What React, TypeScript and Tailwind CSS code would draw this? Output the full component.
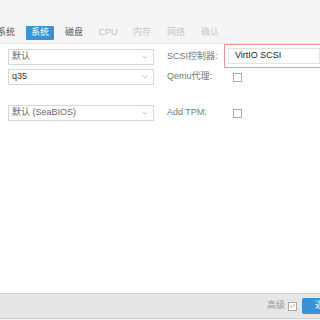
import { Check } from "lucide-react";

const tabs = [
    { label: "系统", tone: "text-[#555]" },
    { label: "系统", tone: "bg-[#3892d4] text-white", active: true },
    { label: "磁盘", tone: "text-[#555]" },
    { label: "CPU", tone: "text-[#c2c2c2]" },
    { label: "内存", tone: "text-[#c8c8c8]" },
    { label: "网络", tone: "text-[#c8c8c8]" },
    { label: "确认", tone: "text-[#c8c8c8]" },
];

function Select({ value, dark }: { value: string; dark?: boolean }) {
    return (
        <div className="flex h-[16px] w-[146px] items-center justify-between border border-[#d6d6d6] bg-white pl-[3px] pr-[5px]">
            <span className={dark ? "text-[#333]" : "text-[#666]"}>{value}</span>
            <svg width="6" height="4" viewBox="0 0 6 4" fill="none">
                <path d="M0.5 0.5 L3 3 L5.5 0.5" stroke="#b5b5b5" strokeWidth="0.8" />
            </svg>
        </div>
    );
}

function Box({ checked }: { checked?: boolean }) {
    return (
        <div className="flex h-[9px] w-[9px] items-center justify-center border border-[#a8a8a8] bg-white">
            {checked && <Check className="h-[8px] w-[8px] text-[#777]" strokeWidth={2} />}
        </div>
    );
}

export default function App() {
    return (
        <div className="flex h-[320px] w-[320px] flex-col overflow-hidden bg-white font-['Liberation_Sans','Noto_Sans_CJK_SC',sans-serif] text-[9px]">

            <div className="flex h-[44px] items-end gap-[6px] border-b border-[#e8e8e8] bg-[#f5f5f5] pb-[3px] pl-0 ml-0">
                <div className="ml-[-8px] flex gap-[6px]">
                    {tabs.map((t, i) => (
                        <div
                            key={i}
                            className={`flex h-[14px] w-[28px] items-center justify-center rounded-[1px] ${t.tone}`}
                        >
                            {t.label}
                        </div>
                    ))}
                </div>
            </div>

            <div className="flex flex-1 flex-col">
                <div className="flex h-[25px] items-start">
                    <div className="ml-[8px] mt-[5px]">
                        <Select value="默认" />
                    </div>
                    <div className="ml-[13px] mt-[5px] flex h-[16px] w-[57px] items-center text-[#777]">SCSI控制器:</div>
                    <div className="h-[24px] flex-1 border border-[#f29393] bg-white p-[3px] mr-[-4px]">
                        <div className="flex h-[16px] items-center border border-[#e2e2e2] pl-[6px] text-[#222]">
                            VirtIO SCSI
                        </div>
                    </div>
                </div>

                <div className="flex h-[16px] items-center">
                    <div className="ml-[8px]">
                        <Select value="q35" dark />
                    </div>
                    <div className="ml-[13px] w-[57px] text-[#777]">Qemu代理:</div>
                    <div className="ml-[9px]">
                        <Box />
                    </div>
                </div>

                <div className="h-[20px]" />

                <div className="flex h-[16px] items-center">
                    <div className="ml-[8px]">
                        <Select value="默认 (SeaBIOS)" />
                    </div>
                    <div className="ml-[13px] w-[57px] text-[#777]">Add TPM:</div>
                    <div className="ml-[9px]">
                        <Box />
                    </div>
                </div>
            </div>

            <div className="flex h-[26px] items-center justify-end gap-[3px] border-y border-[#d2d2d2] bg-[#e6e6e6]">
                <span className="text-[#999]">高级</span>
                <Box checked />
                <button className="ml-[2px] mr-[-26px] flex h-[16px] w-[44px] shrink-0 items-center justify-center rounded-[2px] bg-[#3892d4] text-white">
                    返回
                </button>
            </div>
            <div className="h-[1px] bg-[#f2f2f2]" />
        </div>
    );
}
